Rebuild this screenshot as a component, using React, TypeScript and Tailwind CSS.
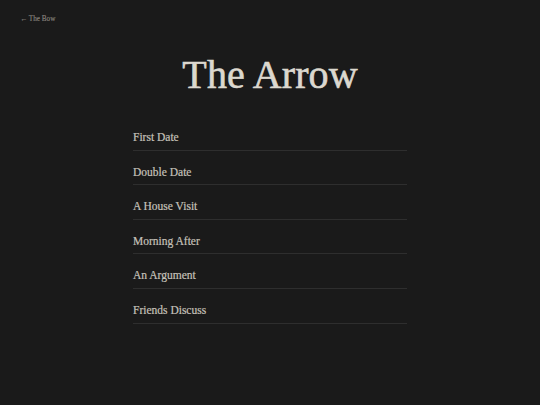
import React from "react";

const chapters = [
  "First Date",
  "Double Date",
  "A House Visit",
  "Morning After",
  "An Argument",
  "Friends Discuss",
];

export default function App() {
  return (
    <div
      className="min-h-screen w-full bg-[#1a1a1a] text-[#dcd8cf]"
      style={{ fontFamily: '"Liberation Serif", "Times New Roman", serif' }}
    >
      <header className="px-[20px] pt-[15px]">
        <a
          href="#"
          className="block text-[7.2px] leading-[8px] text-[#85817b] [-webkit-text-stroke:0.15px_#85817b]"
        >
          ← The Bow
        </a>
      </header>

      <h1 className="mt-[28px] text-center text-[40px] leading-[48px] font-normal text-[#dcd8cf] tracking-[0.1px] [-webkit-text-stroke:0.6px_#dcd8cf]">
        The Arrow
      </h1>

      <ul className="mx-auto mt-[17px] w-[274px]">
        {chapters.map((title) => (
          <li
            key={title}
            className="border-b border-[#2e2e2e] pt-[13px] pb-[4.6px] text-[11.5px] leading-[16px] text-[#c6c2ba] [-webkit-text-stroke:0.2px_#c6c2ba]"
          >
            {title}
          </li>
        ))}
      </ul>
    </div>
  );
}
